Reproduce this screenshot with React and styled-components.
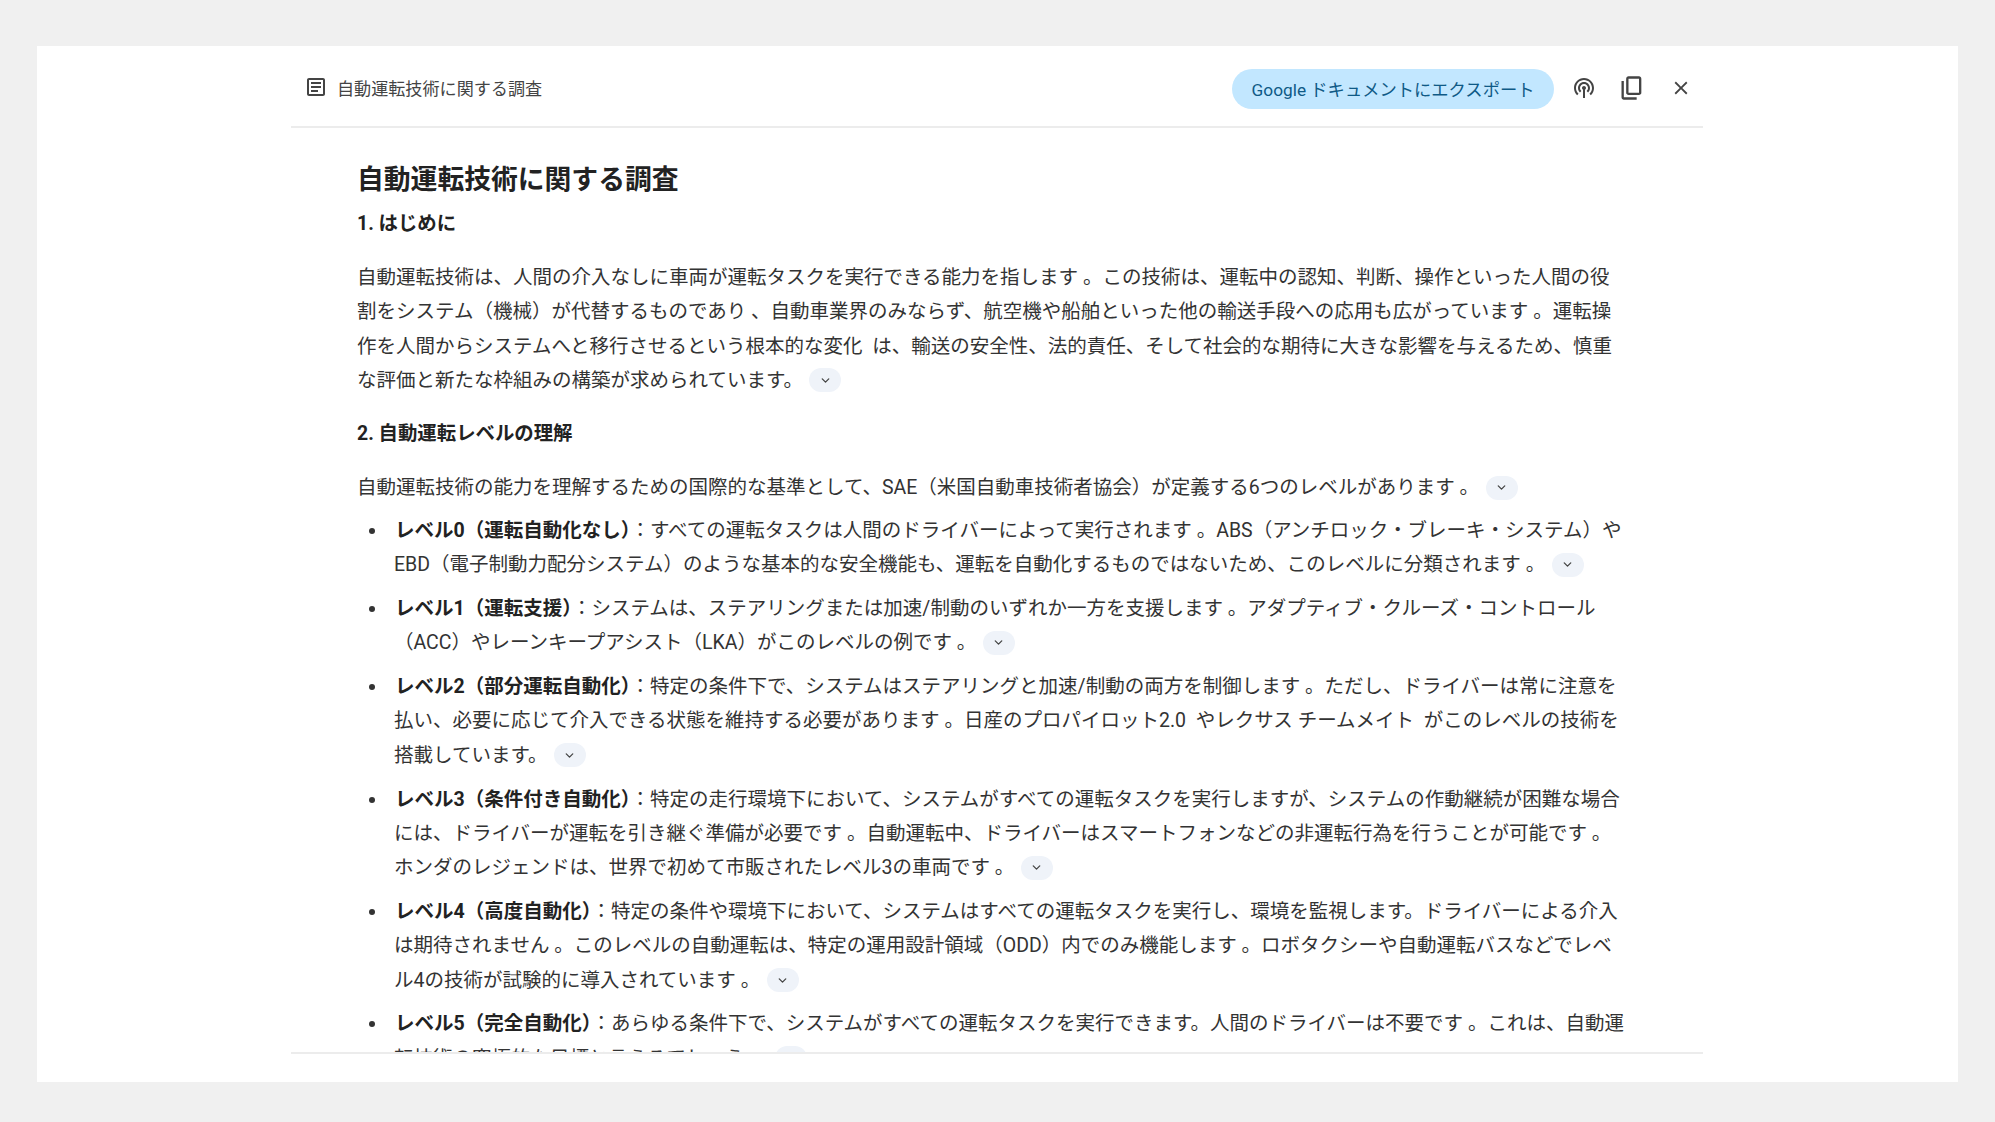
import React from 'react'
import styled, { createGlobalStyle } from 'styled-components'
import { ChevronDown } from 'lucide-react'

const GlobalStyle = createGlobalStyle`
  html, body {
    margin: 0;
    padding: 0;
    background: #f0f0f0;
  }
  body {
    font-family: Roboto, "Noto Sans CJK JP", sans-serif;
    color: #333;
  }
`

const Page = styled.div`
  height: 1122px;
  box-sizing: border-box;
  padding: 46px 37px 40px;
`

const Card = styled.div`
  height: 100%;
  background: #fff;
  padding: 0 255px 28px 254px;
  box-sizing: border-box;
  display: flex;
  flex-direction: column;
`

const Toolbar = styled.div`
  height: 82px;
  flex: none;
  display: flex;
  align-items: center;
  justify-content: space-between;
  padding-top: 2px;
  border-bottom: 2px solid #ececec;
  box-sizing: border-box;
`

const DocTitle = styled.div`
  display: flex;
  align-items: center;
  gap: 9px;
  padding-left: 13px;
  font-size: 17.1px;
  color: #444;
`

const Actions = styled.div`
  display: flex;
  align-items: center;
  padding-top: 3px;
`

const ExportButton = styled.button`
  height: 40px;
  width: 322px;
  border: none;
  border-radius: 20px;
  background: #c2e7ff;
  color: #0f5a86;
  font: inherit;
  font-size: 17.3px;
  padding: 0;
  margin-right: 18px;
`

const IconSlot = styled.span`
  display: inline-flex;
  width: ${props => props.$w}px;
  margin-right: ${props => props.$mr}px;
  margin-bottom: 2px;
  justify-content: center;
  color: #444;
`

const Scroll = styled.div`
  flex: 1;
  overflow: hidden;
  padding: 32px 0 0 66px;
  border-bottom: 2px solid #ececec;
`

const Heading = styled.h1`
  margin: 0 0 7px;
  font-size: 26.8px;
  line-height: 40px;
  font-weight: 700;
  color: #222;
`

const SubHeading = styled.h2`
  margin: 0 0 20px;
  font-size: 19.4px;
  line-height: 34px;
  font-weight: 700;
  color: #222;
`

const Para = styled.p`
  margin: 0 0 ${props => props.$mb}px;
  font-size: 19.5px;
  line-height: 34.3px;
  white-space: nowrap;
`

const List = styled.ul`
  margin: 0;
  padding: 0 0 0 37px;
  list-style: none;
`

const Item = styled.li`
  position: relative;
  margin-bottom: 9.5px;
  font-size: 19.5px;
  line-height: 34.3px;
  white-space: nowrap;

  &::before {
    content: '';
    position: absolute;
    left: -25px;
    top: 14px;
    width: 6px;
    height: 6px;
    border-radius: 50%;
    background: #333;
  }

  strong {
    margin-left: 1px;
    font-weight: 700;
    color: #222;
  }
`

const Chip = styled.span`
  display: inline-flex;
  align-items: center;
  justify-content: center;
  width: 32px;
  height: 24px;
  margin-left: 6.5px;
  border-radius: 12px;
  background: #eff3f9;
  color: #444;
  vertical-align: 0;
`

const More = () => (
  <Chip>
    <ChevronDown size={13} strokeWidth={2.4} />
  </Chip>
)

const Icon = ({ size, d }) => (
  <svg width={size} height={size} viewBox="0 0 24 24" fill="currentColor">
    <path d={d} />
  </svg>
)

const icons = {
  article:
    'M19 5v14H5V5h14m0-2H5c-1.1 0-2 .9-2 2v14c0 1.1.9 2 2 2h14c1.1 0 2-.9 2-2V5c0-1.1-.9-2-2-2z M14 17H7v-2h7v2zm3-4H7v-2h10v2zm0-4H7V7h10v2z',
  podcast:
    'M14 12c0 .74-.4 1.38-1 1.72V22h-2v-8.28c-.6-.35-1-.98-1-1.72 0-1.1.9-2 2-2s2 .9 2 2zM12 6c-3.31 0-6 2.69-6 6 0 1.74.75 3.31 1.94 4.4l1.42-1.42C8.53 14.25 8 13.19 8 12c0-2.21 1.79-4 4-4s4 1.79 4 4c0 1.19-.53 2.25-1.36 2.98l1.42 1.42C17.25 15.31 18 13.74 18 12c0-3.31-2.69-6-6-6zM12 2C6.48 2 2 6.48 2 12c0 2.85 1.2 5.41 3.11 7.24l1.42-1.42C4.98 16.36 4 14.29 4 12c0-4.41 3.59-8 8-8s8 3.59 8 8c0 2.29-.98 4.36-2.53 5.82l1.42 1.42C20.8 17.41 22 14.85 22 12c0-5.52-4.48-10-10-10z',
  copy:
    'M9 18q-.825 0-1.412-.587Q7 16.825 7 16V4q0-.825.588-1.413Q8.175 2 9 2h9q.825 0 1.413.587Q20 3.175 20 4v12q0 .825-.587 1.413Q18.825 18 18 18Zm0-2h9V4H9v12Zm-4 6q-.825 0-1.413-.587Q3 20.825 3 20V6h2v14h11v2Z',
  close:
    'M19 6.41 17.59 5 12 10.59 6.41 5 5 6.41 10.59 12 5 17.59 6.41 19 12 13.41 17.59 19 19 17.59 13.41 12z'
}

const levels = [
  {
    name: 'レベル0（運転自動化なし）',
    lines: [
      '：すべての運転タスクは人間のドライバーによって実行されます 。ABS（アンチロック・ブレーキ・システム）や',
      'EBD（電子制動力配分システム）のような基本的な安全機能も、運転を自動化するものではないため、このレベルに分類されます 。'
    ]
  },
  {
    name: 'レベル1（運転支援）',
    lines: [
      '：システムは、ステアリングまたは加速/制動のいずれか一方を支援します 。アダプティブ・クルーズ・コントロール',
      '（ACC）やレーンキープアシスト（LKA）がこのレベルの例です 。'
    ]
  },
  {
    name: 'レベル2（部分運転自動化）',
    lines: [
      '：特定の条件下で、システムはステアリングと加速/制動の両方を制御します 。ただし、ドライバーは常に注意を',
      '払い、必要に応じて介入できる状態を維持する必要があります 。日産のプロパイロット2.0\u00a0 やレクサス チームメイト\u00a0 がこのレベルの技術を',
      '搭載しています。'
    ]
  },
  {
    name: 'レベル3（条件付き自動化）',
    lines: [
      '：特定の走行環境下において、システムがすべての運転タスクを実行しますが、システムの作動継続が困難な場合',
      'には、ドライバーが運転を引き継ぐ準備が必要です 。自動運転中、ドライバーはスマートフォンなどの非運転行為を行うことが可能です 。',
      'ホンダのレジェンドは、世界で初めて市販されたレベル3の車両です 。'
    ]
  },
  {
    name: 'レベル4（高度自動化）',
    lines: [
      '：特定の条件や環境下において、システムはすべての運転タスクを実行し、環境を監視します。ドライバーによる介入',
      'は期待されません 。このレベルの自動運転は、特定の運用設計領域（ODD）内でのみ機能します 。ロボタクシーや自動運転バスなどでレベ',
      'ル4の技術が試験的に導入されています 。'
    ]
  },
  {
    name: 'レベル5（完全自動化）',
    lines: [
      '：あらゆる条件下で、システムがすべての運転タスクを実行できます。人間のドライバーは不要です 。これは、自動運',
      '転技術の究極的な目標と言えるでしょう 。'
    ]
  }
]

export default function App() {
  return (
    <Page>
      <GlobalStyle />
      <Card>
        <Toolbar>
          <DocTitle>
            <Icon size={24} d={icons.article} />
            自動運転技術に関する調査
          </DocTitle>
          <Actions>
            <ExportButton>Google ドキュメントにエクスポート</ExportButton>
            <IconSlot $w={24} $mr={22}>
              <Icon size={24} d={icons.podcast} />
            </IconSlot>
            <IconSlot $w={28} $mr={24}>
              <Icon size={30} d={icons.copy} />
            </IconSlot>
            <IconSlot $w={22} $mr={11}>
              <Icon size={22} d={icons.close} />
            </IconSlot>
          </Actions>
        </Toolbar>
        <Scroll>
          <Heading>自動運転技術に関する調査</Heading>
          <SubHeading>1. はじめに</SubHeading>
          <Para $mb={19}>
            自動運転技術は、人間の介入なしに車両が運転タスクを実行できる能力を指します 。この技術は、運転中の認知、判断、操作といった人間の役
            <br />
            割をシステム（機械）が代替するものであり 、自動車業界のみならず、航空機や船舶といった他の輸送手段への応用も広がっています 。運転操
            <br />
            作を人間からシステムへと移行させるという根本的な変化{'\u00a0 '}は、輸送の安全性、法的責任、そして社会的な期待に大きな影響を与えるため、慎重
            <br />
            な評価と新たな枠組みの構築が求められています。
            <More />
          </Para>
          <SubHeading>2. 自動運転レベルの理解</SubHeading>
          <Para $mb={8.5}>
            自動運転技術の能力を理解するための国際的な基準として、SAE（米国自動車技術者協会）が定義する6つのレベルがあります 。
            <More />
          </Para>
          <List>
            {levels.map(level => (
              <Item key={level.name}>
                <strong>{level.name}</strong>
                {level.lines.map((line, i) => (
                  <React.Fragment key={line}>
                    {i > 0 && <br />}
                    {line}
                  </React.Fragment>
                ))}
                <More />
              </Item>
            ))}
          </List>
        </Scroll>
      </Card>
    </Page>
  )
}
